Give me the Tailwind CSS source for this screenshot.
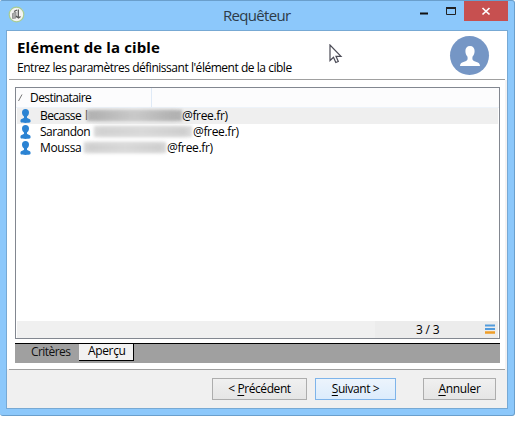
<!DOCTYPE html>
<html lang="fr">
<head>
<meta charset="utf-8">
<title>Requêteur</title>
<script src="https://cdn.jsdelivr.net/npm/@tailwindcss/browser@4"></script>
</head>
<body class="bg-white w-[522px] h-[421px] overflow-hidden font-['Open_Sans','Noto_Sans',sans-serif] text-[12px] leading-4 text-black">
<svg class="hidden">
  <symbol id="person" viewBox="0 0 20 20"><path d="M10 0C7 0 5.400 2 5.400 5c0 2.500.8 4.200 2 5.600.6 2.300.1 3.900-1.300 4.500L2.200 16.400C.8 16.900.2 18 0 20h20c-.2-2-.8-3.100-2.200-3.600l-3.900-1.300c-1.400-.6-1.900-2.200-1.300-4.500 1.200-1.400 2-3.100 2-5.600C14.600 2 13 0 10 0z" fill="currentColor"/></symbol>
  <symbol id="row-person" viewBox="0 0 11 14"><path d="M5.500 0C3.300 0 2 1.400 2 3.500 2 5.300 2.900 6.800 4 7.500v1.300C3.500 9.600.8 9.900.5 11v2c1.500 1.200 8.500 1.200 10 0v-2C10.200 9.900 7.500 9.600 7 8.800V7.500c1.100-.7 2-2.200 2-4C9 1.400 7.700 0 5.500 0z" fill="currentColor"/></symbol>
</svg>
<div class="relative w-[515px] h-[416px] bg-[#8cc8fb] border-t border-r border-b border-[#6a9fcc] rounded-tr-[3px] rounded-b-[3px] rounded-tl-[2px] pl-[6px] pr-[6px] flex flex-col">
  <!-- title bar -->
  <div class="h-[29px] flex shrink-0 items-start relative">
    <svg class="mt-[5px] ml-[2px]" width="17" height="17" viewBox="0 0 17 17"><circle cx="8.500" cy="8.500" r="7.300" fill="#f4f4f2" stroke="#a9cc93" stroke-width="1.200"/><path d="M4.500 7.500l3.500-1.500v6l-3.500 .5z" fill="#aaa" stroke="#888" stroke-width=".8"/><path d="M6 5.500l3-1.500M10.300 3.500v7.500M8 10l2.500 2 2-1.500" fill="none" stroke="#555" stroke-width="1.200"/></svg>
    <div class="absolute left-[217px] top-[4px] text-[15px] leading-[21px] tracking-[-0.68px] text-[#2d3b48]">Requêteur</div>
    <div class="ml-auto flex">
      <svg width="48" height="20" viewBox="0 0 48 20"><path d="M4 12.500h8" stroke="#111" stroke-width="2"/><path d="M30.500 6.500h9v7h-9z" fill="none" stroke="#222"/><path d="M30 7h10" stroke="#222" stroke-width="2"/></svg>
      <div class="w-[44px] h-[20px] bg-[#c75050] flex justify-center"><svg width="44" height="20" viewBox="0 0 44 20"><path d="M18.500 7l7 6.500M25.500 7l-7 6.500" stroke="#fff" stroke-width="1.700"/></svg></div>
    </div>
  </div>
  <!-- client area -->
  <div class="h-[379px] w-[502px] border border-[#77a9d4] bg-white flex flex-col">
    <div class="h-[49px] mx-[2px] border-b border-[#a0a0a0] relative flex justify-between">
      <div class="pl-[8px] pt-[6px]">
        <div class="text-[15px] font-bold leading-[20px] tracking-[0.12px] whitespace-nowrap">Elément de la cible</div>
        <div class="leading-[16px] mt-[3px] tracking-[-0.47px] whitespace-nowrap">Entrez les paramètres définissant l'élément de la cible</div>
      </div>
      <div class="mt-[5px] mr-[16px] size-[39px] rounded-full bg-[#7596c5] text-white flex justify-center"><svg class="mt-[10px]" width="20" height="20"><use href="#person"/></svg></div>
    </div>
    <div class="h-[289px] border-r-2 border-[#f4f2f2] border-b-0 pl-[8px] pt-[7px]">
      <!-- recipient list -->
      <div class="w-[485px] h-[252px] border-[#828790] border flex flex-col">
        <div class="h-[20px] shrink-0 bg-[#fcfcfd] border-b border-[#edf3fa] flex">
          <div class="w-[136px] border-r border-[#dfeaf7] flex"><svg class="mt-[6px] ml-[2px]" width="5" height="8"><path d="M.5 7L4 .5" stroke="#777"/></svg><span class="ml-[7px] mt-[2px] tracking-[-0.57px]">Destinataire</span></div>
        </div>
        <div class="h-4 flex bg-[#efefef] mx-px"><svg class="ml-[3px] mt-[1px] text-[#2b83d3]" width="11" height="14"><use href="#row-person"/></svg><span class="ml-[9px] w-[45px] tracking-[-0.57px]">Becasse</span>
          <div class="relative w-[97px]"><span class="absolute left-0 top-0 text-[#333]">l</span><div class="absolute left-[2px] top-[2px] w-[95px] h-[11px] blur-[1.5px] bg-linear-to-r from-[#b5b5b5] via-[#cbcbcb] to-[#b3b3b3]"></div><div class="absolute left-[6px] top-[5px] w-[86px] h-[5px] blur-[3px] bg-linear-to-r from-[#aaa] via-[#c8c8c8] to-[#aaa]"></div></div><span class="tracking-[-0.35px]">@free.fr)</span></div>
        <div class="h-4 flex mx-px"><svg class="ml-[3px] mt-[1px] text-[#2b83d3]" width="11" height="14"><use href="#row-person"/></svg><span class="ml-[9px] w-[53px] tracking-[-0.5px]">Sarandon</span>
          <div class="relative w-[100px]"><div class="absolute left-px top-[2px] w-[98px] h-[11px] blur-[1.5px] bg-[#dedede]"></div><div class="absolute left-[4px] top-[5px] w-[91px] h-[5px] blur-[3px] bg-linear-to-r from-[#c5c5c5] via-[#d5d5d5] to-[#bfbfbf]"></div></div><span class="tracking-[-0.35px]">@free.fr)</span></div>
        <div class="h-4 flex mx-px"><svg class="ml-[3px] mt-[1px] text-[#2b83d3]" width="11" height="14"><use href="#row-person"/></svg><span class="ml-[9px] w-[43px] tracking-[-0.35px]">Moussa</span>
          <div class="relative w-[84px]"><div class="absolute left-px top-[2px] w-[82px] h-[11px] blur-[1.5px] bg-[#dedede]"></div><div class="absolute left-[3px] top-[5px] w-[78px] h-[5px] blur-[3px] bg-linear-to-r from-[#c0c0c0] via-[#d5d5d5] to-[#c0c0c0]"></div></div><span class="tracking-[-0.35px]">@free.fr)</span></div>
        <div class="mt-auto h-[17px] mx-px bg-[#f0f0f0] flex justify-end"><div class="w-[123px] bg-[#ececec] flex"><span class="ml-[41px] w-[69px] mt-px tracking-[-0.2px]">3 / 3</span><svg class="mt-[3px]" width="10" height="10"><path d="M0 1.500h10M0 5h10" stroke="#529bdc" stroke-width="2"/><path d="M0 8.500h10" stroke="#ee9d27" stroke-width="2.500"/></svg></div></div>
      </div>
      <!-- tabs -->
      <div class="mt-[4px] w-[485px] h-[20px] bg-[#a0a0a0] border-t border-black flex text-[#111]">
        <div class="w-[64px] pl-[16px] tracking-[-0.55px]">Critères</div>
        <div class="w-[55px] h-[17px] bg-[#f2f2f2] border-r border-b border-black pl-[9px] leading-[14px] tracking-[-0.35px] text-black">Aperçu</div>
      </div>
    </div>
    <!-- actions -->
    <div class="flex-1 bg-[#f0f0f0] px-[2px]">
      <div class="border-t border-[#a0a0a0] flex pt-[8px] text-center leading-[20px]">
        <div class="ml-[203px] w-[95px] h-[22px] border border-[#adadad] bg-linear-to-b from-[#f0f0f0] to-[#e5e5e5] tracking-[-0.42px]">&lt; <u class="underline-offset-2">P</u>récédent</div>
        <div class="ml-[8px] w-[81px] h-[22px] border border-[#7eb4ea] bg-linear-to-b from-[#ecf4fc] to-[#dcecfc] tracking-[-0.42px]"><u class="underline-offset-2">S</u>uivant &gt;</div>
        <div class="ml-[27px] w-[73px] h-[22px] border border-[#adadad] bg-linear-to-b from-[#f0f0f0] to-[#e5e5e5] tracking-[-0.3px]"><u class="underline-offset-2">A</u>nnuler</div>
      </div>
    </div>
  </div>
  <!-- pointer -->
  <svg class="absolute left-[329px] top-[43px]" width="14" height="21" viewBox="0 0 14 21"><path d="M1 1v15.500l3.500-3.300 2.300 5.300 2.500-1-2.300-5.200h5z" fill="#fff" stroke="#4c4c57" stroke-width="1.200"/></svg>
</div>
</body>
</html>
